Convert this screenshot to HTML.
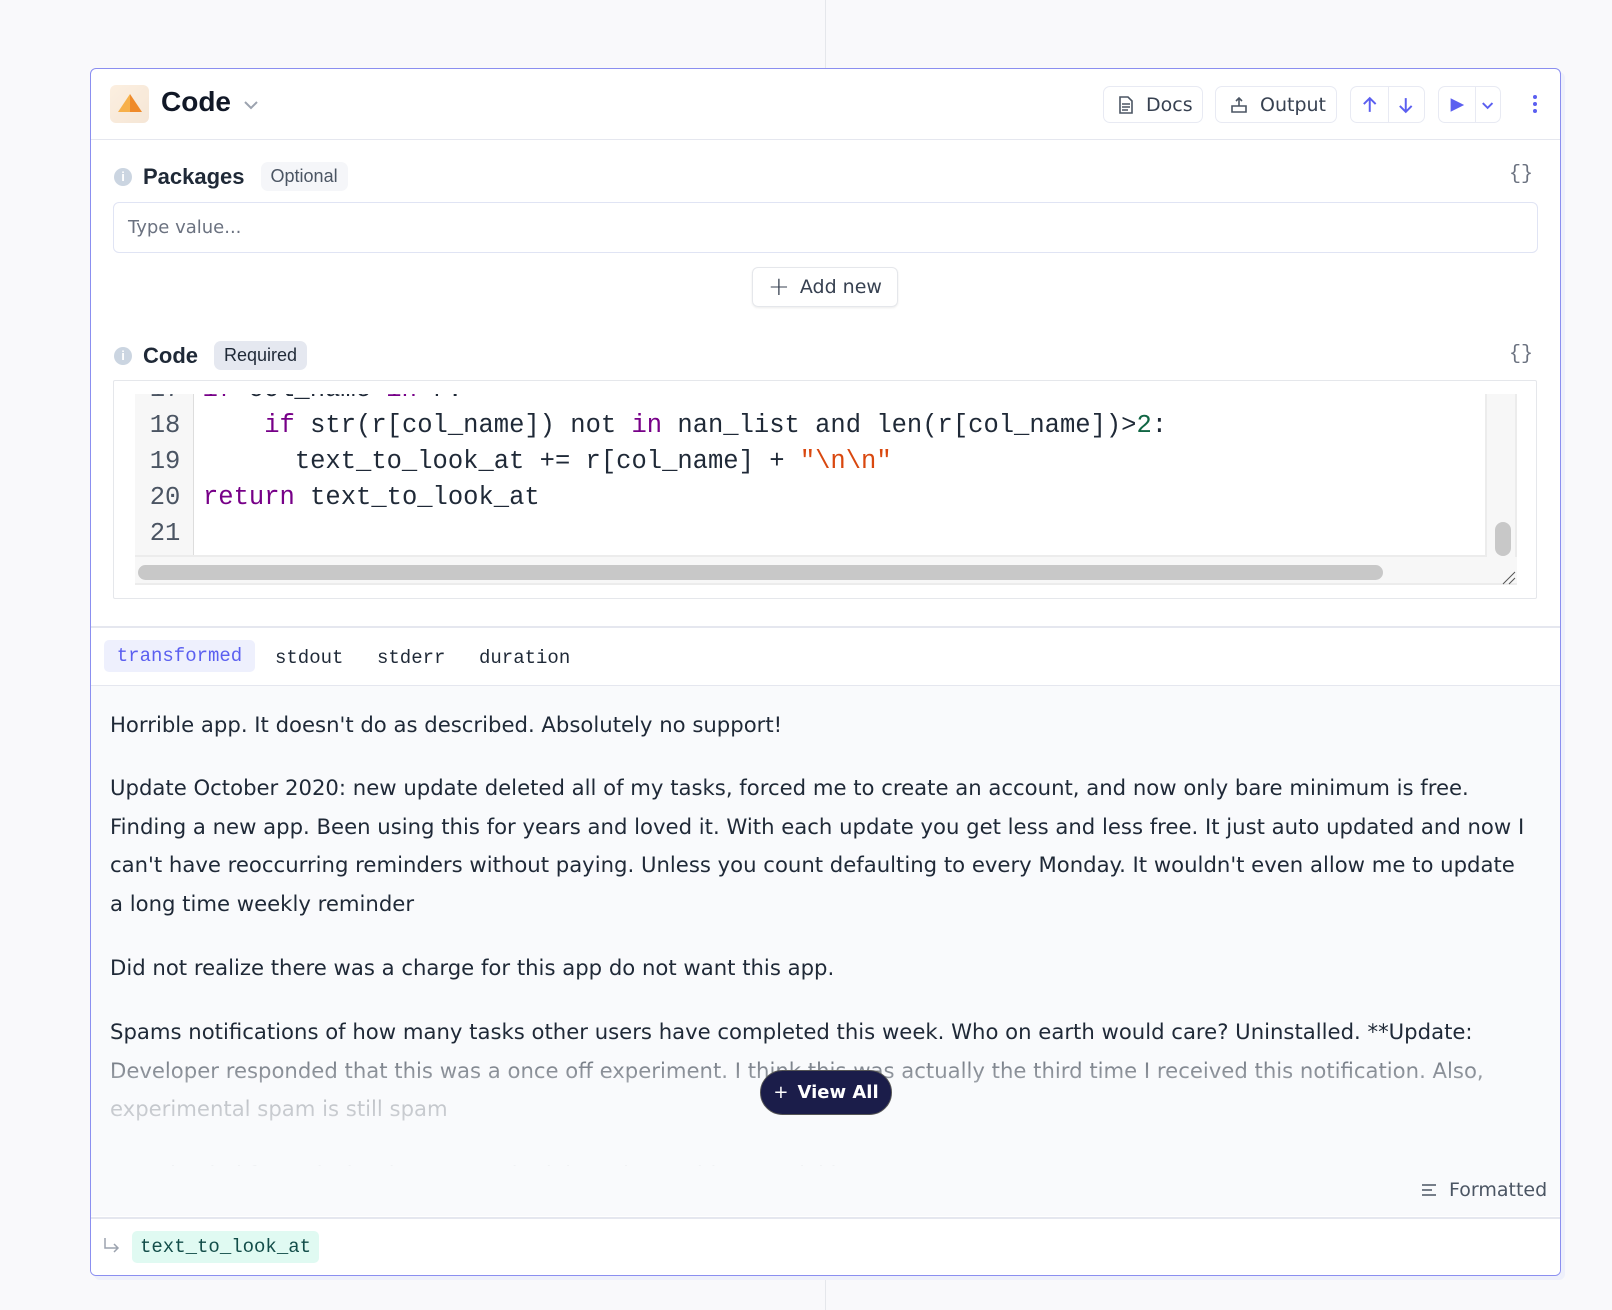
<!DOCTYPE html>
<html><head><meta charset="utf-8"><style>
*{box-sizing:border-box;margin:0;padding:0}
body{width:1612px;height:1310px;background:#f9f9fb;font-family:"DejaVu Sans","Liberation Sans",sans-serif;color:#1f2937;position:relative;overflow:hidden}
.abs{position:absolute}
.vline{position:absolute;left:825px;width:1px;background:#e5e7eb}
.card{position:absolute;left:90px;top:68px;width:1471px;height:1208px;background:#fff;border:1.5px solid #8b8ff0;border-radius:6px;box-shadow:4px 4px 0 #eef0fb;overflow:hidden}
.btn{position:absolute;top:17px;height:37px;border:1px solid #e8eaf3;border-radius:7px;background:#fff;display:flex;align-items:center;font-size:19px;color:#374151}
.mono{font-family:"Liberation Mono",monospace}
.lbl{position:absolute;font-family:"Liberation Sans",sans-serif;font-size:22px;font-weight:bold;color:#1f2937;display:flex;align-items:center}
.info{width:18px;height:18px;border-radius:50%;background:#cbd5e1;color:#fff;font-size:13px;display:inline-flex;align-items:center;justify-content:center;margin-right:11px;font-weight:bold}
.tag{font-size:18px;font-weight:normal;padding:4px 10px;border-radius:7px;margin-left:16px}
.p{position:absolute;left:19px;width:1425px;font-size:21.2px;line-height:38.5px;color:#1f2937}
.ln{position:absolute;left:0;width:60px;text-align:center;color:#4b5563}
.cl{position:absolute;left:68px;white-space:pre;color:#1f2937}
.kw{color:#770088}.st{color:#d9480f}.nm{color:#116644}
</style></head><body>
<div class="vline" style="top:0;height:68px"></div>
<div class="vline" style="top:1276px;height:34px"></div>
<div class="card">
 <div class="abs" style="left:19px;top:16px;width:39px;height:38px;border-radius:6px;background:linear-gradient(135deg,#fcefe0,#f5e6d6)">
  <svg width="39" height="38" viewBox="0 0 39 38"><polygon points="20,9 8,27 20,27" fill="#f7b04a"/><polygon points="20,9 32,27 20,27" fill="#ef8a2a"/></svg>
 </div>
 <div class="abs" style="left:70px;top:17px;font-family:'Liberation Sans',sans-serif;font-size:28px;font-weight:bold;color:#111827">Code</div>
 <svg class="abs" style="left:152px;top:30px" width="16" height="12" viewBox="0 0 16 12"><path d="M2 3l6 6 6-6" stroke="#9ca3af" stroke-width="2" fill="none"/></svg>
 <div class="btn" style="left:1012px;width:100px;padding-left:14px"><svg width="16" height="18" viewBox="0 0 16 18"><path d="M2 1h8l4 4v12H2z M4 8h8 M4 11h8 M4 14h6" stroke="#4b5563" stroke-width="1.6" fill="none"/></svg><span style="margin-left:12px">Docs</span></div>
 <div class="btn" style="left:1124px;width:122px;padding-left:14px"><svg width="18" height="18" viewBox="0 0 18 18"><path d="M2 10v6h14v-6H2z M9 2v8 M6 5l3-3 3 3" stroke="#4b5563" stroke-width="1.6" fill="none"/></svg><span style="margin-left:12px">Output</span></div>
 <div class="btn" style="left:1259px;width:75px"><svg width="37" height="20" viewBox="0 0 37 20"><path d="M19 17V3 M13 9l6-6 6 6" stroke="#5b5ff0" stroke-width="2" fill="none"/></svg><div style="width:1px;height:37px;background:#e8eaf3"></div><svg width="36" height="20" viewBox="0 0 36 20"><path d="M18 3v14 M12 11l6 6 6-6" stroke="#5b5ff0" stroke-width="2" fill="none"/></svg></div>
 <div class="btn" style="left:1347px;width:63px"><svg width="37" height="20" viewBox="0 0 37 20"><polygon points="12,3 26,10 12,17" fill="#5b5ff0"/></svg><div style="width:1px;height:37px;background:#e8eaf3"></div><svg width="25" height="20" viewBox="0 0 25 20"><path d="M7 8l5 5 5-5" stroke="#5b5ff0" stroke-width="2" fill="none"/></svg></div>
 <svg class="abs" style="left:1440px;top:24px" width="8" height="22" viewBox="0 0 8 22"><circle cx="4" cy="4" r="2" fill="#5b5ff0"/><circle cx="4" cy="11" r="2" fill="#5b5ff0"/><circle cx="4" cy="18" r="2" fill="#5b5ff0"/></svg>
 <div class="abs" style="left:0;top:70px;width:100%;height:1px;background:#e5e7ef"></div>

 <div class="lbl" style="left:23px;top:93px"><span class="info">i</span>Packages<span class="tag" style="background:#f5f6f9;color:#4b5563">Optional</span></div>
 <div class="abs mono" style="left:1418px;top:94px;font-size:20px;color:#6b7280">{}</div>
 <div class="abs" style="left:22px;top:133px;width:1425px;height:51px;border:1px solid #e0e4f4;border-radius:6px;padding:0 14px;display:flex;align-items:center;font-size:18px;color:#6b7280">Type value...</div>
 <div class="abs" style="left:661px;top:198px;width:146px;height:40px;border:1px solid #e5e7eb;border-radius:6px;box-shadow:0 1px 2px rgba(0,0,0,.08);display:flex;align-items:center;justify-content:center;font-size:19px;color:#374151"><span style="font-size:26px;margin-right:10px;font-weight:300">+</span>Add new</div>

 <div class="lbl" style="left:23px;top:272px"><span class="info">i</span>Code<span class="tag" style="background:#e5e8f0;color:#1f2937">Required</span></div>
 <div class="abs mono" style="left:1418px;top:274px;font-size:20px;color:#6b7280">{}</div>
 <div class="abs" style="left:22px;top:311px;width:1424px;height:219px;border:1px solid #e5e7eb;border-radius:2px;overflow:hidden">
  <div class="abs mono" style="left:21px;top:13px;width:1352px;height:163px;background:#fff;font-size:25.5px;overflow:hidden;border-right:2px solid #ececec;border-bottom:2px solid #ececec">
   <div class="abs" style="left:0;top:0;width:59px;height:163px;background:#f7f7f7;border-right:1px solid #ddd"></div>
   <div class="ln" style="top:-19px">17</div><div class="cl" style="top:-19px;left:37px">  <span class="kw">if</span> col_name <span class="kw">in</span> r:</div>
   <div class="ln" style="top:17px">18</div><div class="cl" style="top:17px">    <span class="kw">if</span> str(r[col_name]) not <span class="kw">in</span> nan_list and len(r[col_name])&gt;<span class="nm">2</span>:</div>
   <div class="ln" style="top:53px">19</div><div class="cl" style="top:53px">      text_to_look_at += r[col_name] + <span class="st">"\n\n"</span></div>
   <div class="ln" style="top:89px">20</div><div class="cl" style="top:89px"><span class="kw">return</span> text_to_look_at</div>
   <div class="ln" style="top:125px">21</div>
  </div>
  <div class="abs" style="left:21px;top:176px;width:1382px;height:28px;background:#f7f7f7;border-bottom:2px solid #ececec"></div>
  <div class="abs" style="left:24px;top:184px;width:1245px;height:15px;border-radius:8px;background:#c8c8c8"></div>
  <div class="abs" style="left:1373px;top:13px;width:30px;height:163px;background:#f7f7f7;border-right:2px solid #ececec"></div>
  <div class="abs" style="left:1381px;top:141px;width:16px;height:34px;border-radius:8px;background:#c8c8c8"></div>
  <svg class="abs" style="left:1388px;top:190px" width="14" height="14" viewBox="0 0 14 14"><path d="M1 13L13 1 M7 13l6-6" stroke="#555" stroke-width="1"/></svg>
 </div>

 <div class="abs" style="left:0;top:557px;width:100%;height:1.5px;background:#e5e7ef"></div>
 <div class="abs mono" style="left:13px;top:571px;height:32px;width:151px;background:#eef0fd;border-radius:5px;font-size:19px;color:#5b5ff0;display:flex;align-items:center;justify-content:center">transformed</div>
 <div class="abs mono" style="left:184px;top:578px;font-size:19px;color:#1f2937">stdout</div>
 <div class="abs mono" style="left:286px;top:578px;font-size:19px;color:#1f2937">stderr</div>
 <div class="abs mono" style="left:388px;top:578px;font-size:19px;color:#1f2937">duration</div>
 <div class="abs" style="left:0;top:616px;width:100%;height:1px;background:#e5e7ef"></div>

 <div class="abs" style="left:0;top:617px;width:100%;height:530px;background:#f9fafc"></div>
 <div class="abs" style="left:0;top:617px;width:100%;height:480px;overflow:hidden">
 <div class="p" style="top:20px">Horrible app. It doesn't do as described. Absolutely no support!</div>
 <div class="p" style="top:83px">Update October 2020: new update deleted all of my tasks, forced me to create an account, and now only bare minimum is free. Finding a new app. Been using this for years and loved it. With each update you get less and less free. It just auto updated and now I can't have reoccurring reminders without paying. Unless you count defaulting to every Monday. It wouldn't even allow me to update<br>a long time weekly reminder</div>
 <div class="p" style="top:263px">Did not realize there was a charge for this app do not want this app.</div>
 <div class="p" style="top:327px">Spams notifications of how many tasks other users have completed this week. Who on earth would care? Uninstalled. **Update: Developer responded that this was a once off experiment. I think this was actually the third time I received this notification. Also, experimental spam is still spam</div>
 <div class="p" style="top:470px">Downloaded for tasks but it cannot schedule tasks. Nothing special here.</div>
 <div class="abs" style="left:0;top:363px;width:100%;height:120px;background:linear-gradient(rgba(249,250,252,0.3),rgba(249,250,252,0.75) 45%,rgba(249,250,252,0.93) 100%)"></div>
 </div>
 <div class="abs" style="left:669px;top:1001px;width:132px;height:45px;border-radius:23px;background:#1b1d4a;border:1.5px solid #555;color:#fff;font-size:18px;font-weight:bold;display:flex;align-items:center;justify-content:center"><span style="margin-right:9px;font-weight:normal">+</span>View All</div>
 <div class="abs" style="left:1330px;top:1110px;font-size:19px;color:#4b5563;display:flex;align-items:center"><svg width="16" height="14" viewBox="0 0 16 14" style="margin-right:12px"><path d="M1 2h14 M1 7h10 M1 12h14" stroke="#4b5563" stroke-width="1.5"/></svg>Formatted</div>
 <div class="abs" style="left:0;top:1148px;width:100%;height:1.5px;background:#e5e7ef"></div>
 <div class="abs" style="left:0;top:1150px;width:100%;height:60px;background:#fff"></div>
 <svg class="abs" style="left:12px;top:1168px" width="18" height="16" viewBox="0 0 18 16"><path d="M2 1v10h13 M11 7l4 4-4 4" stroke="#9ca3af" stroke-width="1.5" fill="none"/></svg>
 <div class="abs mono" style="left:41px;top:1162px;height:32px;padding:0 8px;background:#e0faf2;border-radius:5px;font-size:19px;color:#134e4a;display:flex;align-items:center">text_to_look_at</div>
</div>
</body></html>
